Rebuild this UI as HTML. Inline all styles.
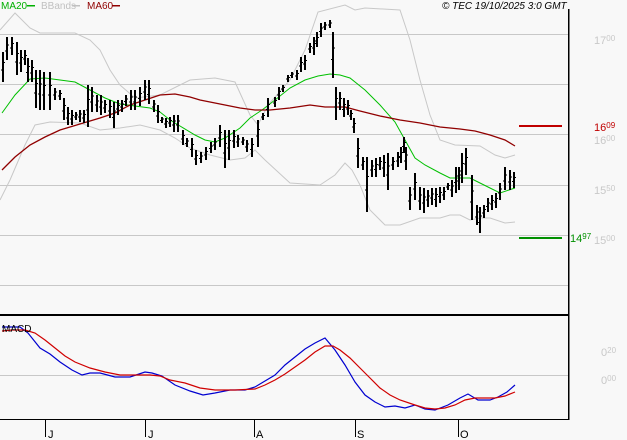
<!DOCTYPE html>
<html><head><meta charset="utf-8"><style>
html,body{margin:0;padding:0;background:#f8f8f8;}
body{width:627px;height:440px;overflow:hidden;position:relative;font-family:"Liberation Sans",sans-serif;}
svg{position:absolute;left:0;top:0;}
text{font-family:"Liberation Sans",sans-serif;}
</style></head><body>
<svg id="s" width="627" height="440" viewBox="0 0 627 440" shape-rendering="crispEdges">
<g stroke="#c8c8c8" stroke-width="1">
<line x1="0" y1="34.5" x2="569" y2="34.5"/><line x1="0" y1="84.5" x2="569" y2="84.5"/>
<line x1="0" y1="134.5" x2="569" y2="134.5"/><line x1="0" y1="185.5" x2="569" y2="185.5"/>
<line x1="0" y1="235.5" x2="569" y2="235.5"/><line x1="0" y1="285.5" x2="569" y2="285.5"/>
<line x1="0" y1="375.5" x2="569" y2="375.5"/>
</g>
<g fill="none" stroke-width="1" shape-rendering="auto">
<polyline stroke="#c8c8c8" points="0,30 15,13 30,28 40,33 75,33 90,40 100,50 110,70 120,85 135,98 160,95 190,80 215,78 235,82 250,115 258,125 268,105 290,80 305,50 318,12 345,5 355,10 365,8 400,10 410,40 420,80 430,115 440,140 455,145 480,146 495,155 505,158 515,155"/>
<polyline stroke="#c8c8c8" points="0,200 10,180 25,145 35,125 50,122 80,123 100,130 120,128 140,125 160,130 175,138 190,148 210,155 230,160 245,158 255,150 265,160 290,183 320,185 335,175 345,163 352,170 360,185 370,210 385,225 400,225 420,218 440,218 450,215 460,215 470,220 480,218 490,218 505,223 515,222"/>
<polyline stroke="#00c000" points="2,113 15,95 30,79 45,78 60,80 75,82 90,90 105,98 120,104 135,106 150,108 160,112 170,120 180,126 195,135 205,140 215,142 225,138 240,128 250,118 262,110 275,100 290,88 305,80 318,76 330,74 340,75 350,78 365,90 380,105 395,122 405,140 415,158 425,165 440,173 450,178 470,178 480,183 490,188 500,193 515,188"/>
<polyline stroke="#900000" stroke-width="1.3" points="2,170 15,157 30,145 45,137 60,130 80,124 100,118 115,113 130,105 145,100 160,95 175,94 190,97 200,100 220,104 240,108 255,110 270,110 290,108 310,105 325,107 335,107 345,107 360,111 380,116 400,120 420,123 440,127 460,129 475,131 490,135 505,140 515,146"/>
</g>
<g id="bars" stroke="#000" stroke-width="2"></g>
<line x1="519" y1="126" x2="562" y2="126" stroke="#c00000" stroke-width="2"/>
<line x1="519" y1="238" x2="562" y2="238" stroke="#009000" stroke-width="2"/>
<g fill="none" stroke-width="1.2" shape-rendering="auto">
<polyline stroke="#0000d0" points="2,327 20,327 28,333 40,348 50,354 60,362 72,370 82,375 90,373 100,373 115,377 130,377 145,372 152,373 162,376 175,385 190,391 203,395 215,393 230,390 245,390 255,387 265,381 275,375 285,365 295,357 305,349 315,343 325,338 335,350 345,365 355,382 365,395 375,402 385,407 395,406 405,408 415,405 425,409 435,410 448,405 460,398 468,394 478,400 490,400 498,397 507,392 515,385"/>
<polyline stroke="#d00000" points="2,331 12,330 25,330 35,333 45,340 55,348 65,356 75,362 90,368 105,372 120,375 135,375 150,375 160,376 170,380 185,383 200,388 215,390 235,390 255,389 265,385 275,380 285,374 295,367 305,360 315,352 325,346 333,346 340,350 350,358 360,368 370,378 380,388 390,395 400,400 415,405 425,408 435,409 445,408 455,405 465,400 475,398 485,398 495,398 505,396 515,392"/>
</g>
<rect x="0" y="314" width="569" height="2" fill="#000"/>
<rect x="568" y="9" width="1.5" height="411" fill="#000"/>
<rect x="0" y="419" width="569" height="1.2" fill="#000"/>
<g fill="#000"><rect x="45" y="419" width="1" height="18"/><rect x="145" y="419" width="1" height="18"/><rect x="254" y="419" width="1" height="18"/><rect x="355" y="419" width="1" height="18"/><rect x="458" y="419" width="1" height="18"/></g>
<g font-size="11" fill="#000"><text x="48" y="438">J</text><text x="148" y="438">J</text><text x="256" y="438">A</text><text x="357" y="438">S</text><text x="460" y="438">O</text></g>
<text x="2" y="332" font-size="10" fill="#000">MACD</text>
<g font-size="10"><text x="1" y="9" fill="#00b000">MA20</text><rect x="27" y="5" width="8" height="1.5" fill="#00b000"/>
<text x="41" y="9" fill="#c0c0c0">BBands</text><rect x="72" y="5" width="8" height="1.5" fill="#c0c0c0"/>
<text x="87" y="9" fill="#900000">MA60</text><rect x="112" y="5" width="8" height="1.5" fill="#900000"/></g>
<text x="442" y="9" font-size="10" font-style="italic" fill="#000">© TEC 19/10/2025 3:0 GMT</text>
<g font-size="11" fill="#c8c8c8">
<text x="594" y="44">17<tspan font-size="8" dy="-3">00</tspan></text>
<text x="594" y="144">16<tspan font-size="8" dy="-3">00</tspan></text>
<text x="594" y="194">15<tspan font-size="8" dy="-3">50</tspan></text>
<text x="594" y="244">15<tspan font-size="8" dy="-3">00</tspan></text>
<text x="601" y="356">0<tspan font-size="8" dy="-3">20</tspan></text>
<text x="601" y="384">0<tspan font-size="8" dy="-3">00</tspan></text>
</g>
<text x="594" y="131" font-size="11" fill="#c00000">16<tspan font-size="8" dy="-3">09</tspan></text>
<text x="570" y="242" font-size="11" fill="#009000">14<tspan font-size="8" dy="-3">97</tspan></text>
</svg>
<script>
var b=[[3,52,82],[7,37,60],[12,37,55],[17,42,75],[21,50,72],[25,50,65],[28,58,82],[32,60,82],[36,70,108],[40,70,110],[44,72,110],[50,72,110],[55,88,100],[60,90,100],[64,98,120],[68,107,125],[72,110,125],[76,112,120],[80,110,122],[84,110,123],[88,85,127],[92,87,112],[97,95,112],[101,95,115],[105,100,113],[110,100,118],[114,102,128],[118,100,115],[122,100,112],[126,95,106],[131,90,110],[135,90,110],[140,87,106],[145,80,100],[149,80,104],[154,100,112],[158,105,123],[162,117,123],[166,118,128],[170,117,127],[174,115,132],[178,115,132],[183,130,145],[187,138,147],[192,138,157],[196,150,165],[201,152,163],[206,147,160],[211,142,153],[215,138,150],[220,125,147],[225,130,168],[229,130,160],[234,130,148],[238,135,147],[243,137,145],[247,140,152],[252,138,157],[258,120,147],[263,113,120],[268,98,117],[275,97,107],[279,87,100],[283,85,92],[288,75,82],[292,72,78],[297,70,80],[301,57,72],[305,55,70],[310,43,53],[314,37,55],[317,32,47],[321,23,37],[325,22,30],[330,20,28],[333,32,78],[336,87,120],[340,92,110],[344,98,117],[348,100,115],[351,110,120],[354,118,133],[358,138,168],[363,157,170],[367,157,212],[372,160,177],[376,158,177],[380,157,170],[384,155,177],[388,153,190],[393,157,170],[398,152,167],[401,147,163],[404,137,153],[406,147,170],[410,187,210],[415,173,200],[420,187,210],[424,188,213],[428,190,207],[432,188,205],[436,188,207],[440,187,203],[444,187,200],[448,183,190],[452,180,197],[456,167,193],[459,167,190],[462,153,183],[466,148,175],[472,175,220],[477,205,225],[480,207,233],[484,205,218],[488,198,212],[492,195,210],[496,193,208],[500,183,200],[505,167,190],[510,170,190],[514,172,188]];
var g=document.getElementById('bars'),h='';
for(var i=0;i<b.length;i++){var x=b[i][0],t=b[i][1],l=b[i][2],o=t+(l-t)*0.6,c=t+(l-t)*0.35;
h+='<line x1="'+x+'" y1="'+t+'" x2="'+x+'" y2="'+l+'"/><line x1="'+(x-2)+'" y1="'+o+'" x2="'+x+'" y2="'+o+'" stroke-width="1"/><line x1="'+x+'" y1="'+c+'" x2="'+(x+2)+'" y2="'+c+'" stroke-width="1"/>';}
g.innerHTML=h;
</script>
</body></html>
